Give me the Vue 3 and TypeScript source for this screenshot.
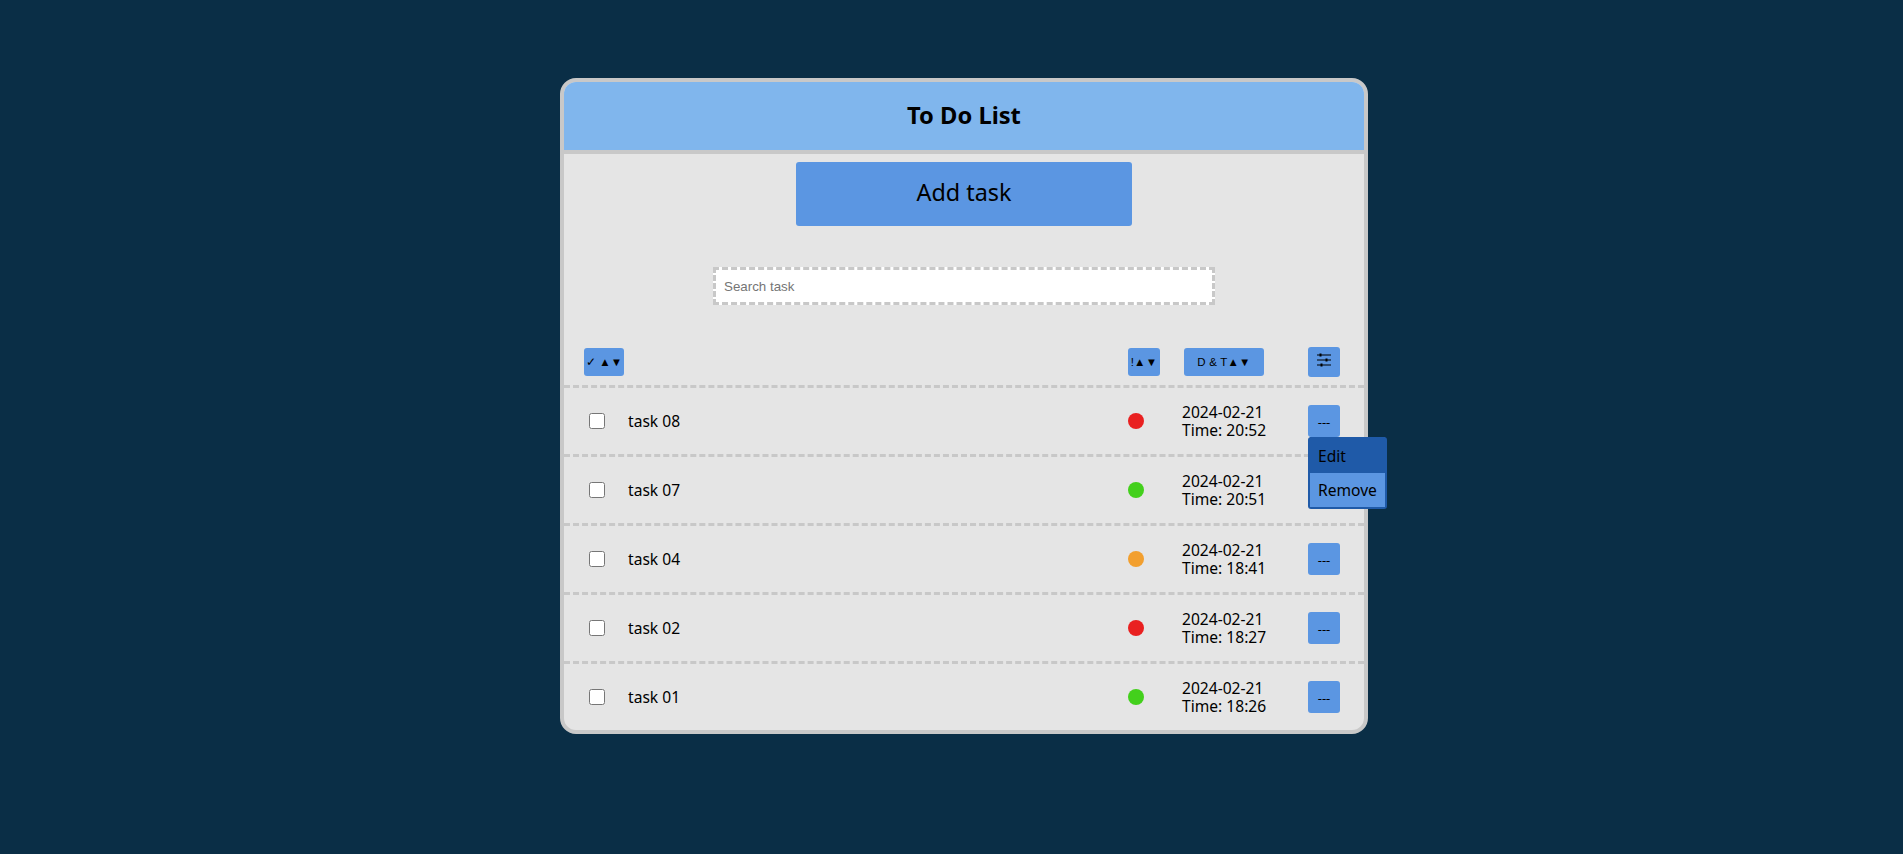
<script setup lang="ts">
interface Task {
  name: string
  priority: 'high' | 'medium' | 'low'
  date: string
  time: string
  menu?: boolean
}

const tasks: Task[] = [
  { name: 'task 08', priority: 'high', date: '2024-02-21', time: '20:52', menu: true },
  { name: 'task 07', priority: 'low', date: '2024-02-21', time: '20:51' },
  { name: 'task 04', priority: 'medium', date: '2024-02-21', time: '18:41' },
  { name: 'task 02', priority: 'high', date: '2024-02-21', time: '18:27' },
  { name: 'task 01', priority: 'low', date: '2024-02-21', time: '18:26' },
]
</script>

<template>
  <div class="page">
    <main class="card">
      <header class="card__title">
        <h1>To Do List</h1>
      </header>

      <div class="card__tools">
        <button class="add-btn" type="button">Add task</button>
        <input class="search" type="text" placeholder="Search task" />
      </div>

      <div class="row row--head">
        <button class="sort-btn sort-btn--check" type="button">✓ ▲▼</button>
        <span></span>
        <button class="sort-btn sort-btn--prio" type="button">!▲▼</button>
        <button class="sort-btn sort-btn--date" type="button">D &amp; T▲▼</button>
        <button class="icon-btn icon-btn--head" type="button" aria-label="Settings">
          <svg width="14" height="14" viewBox="0 -1 14 14" aria-hidden="true">
            <path d="M0 1h14M0 6h14M0 11h14" fill="none" stroke="#000" stroke-width="1" />
            <rect x="2.5" y="-0.5" width="2" height="3" fill="#000" />
            <rect x="8.5" y="4.5" width="2" height="3" fill="#000" />
            <rect x="3.5" y="9.5" width="2" height="3" fill="#000" />
          </svg>
        </button>
      </div>

      <div v-for="task in tasks" :key="task.name" class="row row--task">
        <input class="check" type="checkbox" />
        <span class="name">{{ task.name }}</span>
        <span class="dot" :class="`dot--${task.priority}`"></span>
        <span class="stamp">{{ task.date }}<br />Time: {{ task.time }}</span>
        <div class="actions">
          <button class="icon-btn icon-btn--more" type="button">---</button>
          <div v-if="task.menu" class="menu">
            <div class="menu__item menu__item--active">Edit</div>
            <div class="menu__item">Remove</div>
          </div>
        </div>
      </div>
    </main>
  </div>
</template>

<style>
html,
body {
  margin: 0;
  background: #0a2e46;
}
</style>

<style scoped>
.page {
  min-height: 854px;
  box-sizing: border-box;
  padding: 78px 0 0 560px;
  background: #0a2e46;
  font-family: 'Noto Sans', sans-serif;
  color: #000;
  overflow: hidden;
}

.card {
  width: 800px;
  border: 4px solid #c8c8c8;
  border-radius: 16px;
  background: #e5e5e5;
}

.card__title {
  height: 66px;
  padding-bottom: 2px;
  display: flex;
  align-items: center;
  justify-content: center;
  background: #80b6ed;
  border-bottom: 4px solid #c8c8c8;
  border-radius: 12px 12px 0 0;
}

.card__title h1 {
  margin: 0;
  font-size: 23.7px;
  font-weight: 700;
}

.card__tools {
  display: flex;
  flex-direction: column;
  align-items: center;
  padding-top: 8px;
}

.add-btn {
  width: 336px;
  height: 64px;
  padding: 0 0 4px;
  border: 0;
  border-radius: 3px;
  background: #5b96e2;
  font-family: inherit;
  font-size: 23.4px;
  color: #000;
}

.search {
  width: 502px;
  height: 38px;
  box-sizing: border-box;
  margin-top: 41px;
  padding: 0 8px;
  border: 3px dashed #c8c8c8;
  background: #fff;
  font-family: 'Liberation Sans', sans-serif;
  font-size: 13.33px;
  outline: none;
}

.search::placeholder {
  color: #757575;
}

.row {
  display: grid;
  grid-template-columns: 44px 500px 54px 126px 32px;
  align-items: center;
  padding: 0 24px 0 20px;
}

.row--head {
  height: 37px;
  margin-top: 43px;
  align-items: start;
}

.row--task {
  height: 66px;
  border-top: 3px dashed #c8c8c8;
}

.sort-btn {
  height: 28px;
  padding: 0;
  border: 0;
  border-radius: 3px;
  background: #5b96e2;
  font-family: 'Liberation Sans', sans-serif;
  font-size: 11.5px;
  letter-spacing: 0.2px;
  color: #000;
  white-space: nowrap;
}

.sort-btn--check {
  width: 40px;
}

.sort-btn--prio {
  width: 32px;
}

.sort-btn--date {
  width: 80px;
  margin-left: 2px;
}

.icon-btn {
  width: 32px;
  height: 32px;
  padding: 0;
  border: 0;
  border-radius: 3px;
  background: #5b96e2;
  font-family: 'Noto Sans', sans-serif;
  font-size: 13px;
  color: #000;
  display: flex;
  align-items: center;
  justify-content: center;
}

.icon-btn--more {
  padding-top: 2px;
}

.icon-btn--head {
  height: 30px;
  margin-top: -1px;
}

.icon-btn--head svg {
  margin-bottom: 4px;
}

.check {
  width: 16px;
  height: 16px;
  margin: 0 0 0 5px;
}

.name,
.stamp {
  font-size: 15.6px;
}

.name {
  padding-bottom: 1px;
}

.stamp {
  line-height: 18px;
  white-space: nowrap;
}

.dot {
  width: 16px;
  height: 16px;
  border-radius: 50%;
}

.dot--high {
  background: #e92020;
}

.dot--medium {
  background: #f29f2e;
}

.dot--low {
  background: #43d01c;
}

.actions {
  position: relative;
  width: 32px;
  height: 32px;
}

.menu {
  position: absolute;
  top: 32px;
  left: 0;
  width: 79px;
  box-sizing: border-box;
  padding: 0 2px 2px;
  border-radius: 3px;
  background: #1f5aa8;
  z-index: 2;
}

.menu__item {
  height: 34px;
  display: flex;
  align-items: center;
  padding-left: 8px;
  background: #5b96e2;
  font-size: 15.6px;
}

.menu__item--active {
  height: 36px;
  padding-top: 1px;
  box-sizing: border-box;
  background: #1f5aa8;
}
</style>
